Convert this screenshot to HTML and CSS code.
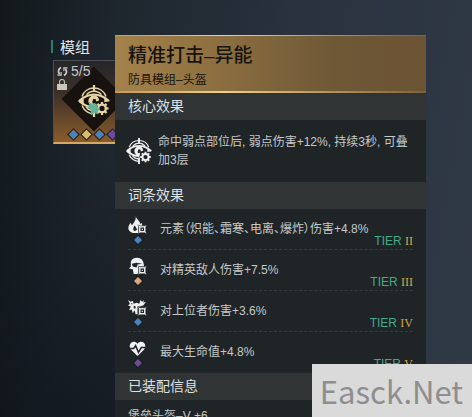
FILE: index.html
```
<!DOCTYPE html>
<html lang="zh-CN">
<head>
  <meta charset="UTF-8">
  <meta name="viewport" content="width=device-width, initial-scale=1.0">
  <title>模组</title>
  <link rel="stylesheet" href="styles.css">
</head>
<body>
  <!-- Shared icon shapes -->
  <svg class="defs" width="0" height="0" aria-hidden="true">
    <symbol id="scope" viewBox="0 0 28 28">
      <g fill="none" stroke="currentColor">
        <path d="M3.500 10A11.200 11.200 0 0 1 24.500 10M3.500 18A11.200 11.200 0 0 0 15 25.200" stroke-width="1.300"/>
        <path d="M7.500 8.500A8.500 8.500 0 0 1 20.500 8.500M7 19A8.500 8.500 0 0 0 14 22.500" stroke-width="1.300"/>
        <path d="M14 0v6M14 21v7" stroke-width="2"/>
        <path d="M1 14Q7 8.500 14 8.500T27 14M1 14Q7 19.500 14.500 19.500" stroke-width="2"/>
      </g>
      <path d="M0 14l5-3v6zM28 14l-5-3v4z" fill="currentColor"/>
      <path d="M14 9a5 5 0 1 0 1 9.900V16l-2 .5-.5-2 1-2.500 2 .5.500 2 2.500-1A5 5 0 0 0 14 9z" fill="currentColor"/>
      <circle cx="21" cy="20.500" r="3.300" fill="none" stroke="currentColor" stroke-width="2"/>
      <path d="M21 14.800v2M21 24.200v2M15.300 20.500h2M24.700 20.500h2M17 16.500l1.400 1.400M23.600 23.100l1.400 1.400M25 16.500l-1.400 1.400M17 24.500l1.400-1.400" stroke="currentColor" stroke-width="2"/>
    </symbol>
    <symbol id="chip" viewBox="0 0 8 8">
      <path d="M0 0l2 1h4l2-1-1 2v4l1 2-2-1H2L0 8l1-2V2z" fill="currentColor" stroke="#1f2427" stroke-width=".5"/>
      <path d="M2.500 2.500h3v3h-3z" fill="#1f2427"/>
      <path d="M3.500 3.500h1v1h-1z" fill="currentColor"/>
    </symbol>
  </svg>

  <main class="screen">
    <section class="modules">
      <h2 class="modules-title">模组</h2>
      <div class="card">
        <div class="card-diamond"></div>
        <svg class="card-scope"><use href="#scope"/></svg>
        <svg class="card-splash" viewBox="0 0 14 15"><path d="M1 0l4 3 4-1 1 4 3 2-3 2 1 4-4-2-4 3V9L0 6l2-2z" fill="#62b59a"/></svg>
        <div class="card-count">
          <svg class="cycle" viewBox="0 0 12 12" fill="none" stroke="currentColor" stroke-width="2"><path d="M4.500 1.800A4.300 4.300 0 0 0 3 9M7.500 10.200A4.300 4.300 0 0 0 9 3"/><path d="M.500 10h4V6.500M11.500 2h-4v3.500" stroke-width="1.300"/></svg>
          <span>5/5</span>
        </div>
        <svg class="lock" viewBox="0 0 10 11"><path d="M2.500 6V3a2.500 2.500 0 0 1 5 0v3" fill="none" stroke="#b9b6b2" stroke-width="1.200"/><path d="M0 5h10v6H0z" fill="#c9c5c0"/></svg>
        <div class="card-gems">
          <i class="gem blue"></i>
          <i class="gem yellow"></i>
          <i class="gem blue"></i>
          <i class="gem purple"></i>
        </div>
      </div>
    </section>

    <article class="tooltip">
      <header class="tooltip-header">
        <h1>精准打击–异能</h1>
        <p>防具模组–头盔</p>
      </header>

      <h3 class="section-title">核心效果</h3>
      <div class="core">
        <svg class="core-icon"><use href="#scope"/></svg>
        <p>命中弱点部位后, 弱点伤害+12%, 持续3秒, 可叠加3层</p>
      </div>

      <h3 class="section-title">词条效果</h3>
      <ul class="affixes">
        <li>
          <div class="affix-icon">
            <svg viewBox="0 0 20 20"><path d="M8 0c1 4 5 5 5 9l1-2c1 1 1 3 1 4h-4v7H7c-8-1-8-7-4-11l1 3c2-3 5-6 4-10z" fill="currentColor"/><path d="M7 10c2 2 1 3 3 4l-3 2c-2-1-2-4 0-6z" fill="#1f2427"/><use href="#chip" x="10" y="9" width="10" height="10"/></svg>
            <i class="gem blue"></i>
          </div>
          <div class="affix-body">
            <p class="affix-text">元素（炽能、霜寒、电离、爆炸）伤害+4.8%</p>
            <p class="tier">TIER <b>II</b></p>
          </div>
        </li>
        <li>
          <div class="affix-icon">
            <svg viewBox="0 0 20 20"><path d="M3 5C4 0 14-1 16 5l1 5h-6v6l-1 2H6l-1-5-4-1 2-2z" fill="currentColor"/><path d="M4 7l5-1 6 1-5 1-1 3-4-1z" fill="#1f2427"/><use href="#chip" x="10" y="9" width="10" height="10"/></svg>
            <i class="gem orange"></i>
          </div>
          <div class="affix-body">
            <p class="affix-text">对精英敌人伤害+7.5%</p>
            <p class="tier">TIER <b>III</b></p>
          </div>
        </li>
        <li>
          <div class="affix-icon">
            <svg viewBox="0 0 20 20"><path d="M0 2l3 2 2-1 1 3 3-1 3 1 1-4 2 2 2-2-1 3 3-1-3 4-4 1h-2v8H8l-1-4-2 3-1-4-3 1 2-4-3-1 2-2z" fill="currentColor"/><path d="M6 8l2 1v2H6zM3 5l2 1-1 1z" fill="#1f2427"/><use href="#chip" x="10" y="9" width="10" height="10"/></svg>
            <i class="gem blue"></i>
          </div>
          <div class="affix-body">
            <p class="affix-text">对上位者伤害+3.6%</p>
            <p class="tier">TIER <b>IV</b></p>
          </div>
        </li>
        <li>
          <div class="affix-icon">
            <svg viewBox="0 0 20 20"><path d="M10 18L3 11C-1 5 6 0 10 5c4-5 11 0 7 6z" fill="currentColor"/><path d="M2 10h4l2-3 3 7 3-5h4" fill="none" stroke="#1f2427" stroke-width="1.600"/></svg>
            <i class="gem purple"></i>
          </div>
          <div class="affix-body">
            <p class="affix-text">最大生命值+4.8%</p>
            <p class="tier">TIER <b>V</b></p>
          </div>
        </li>
      </ul>

      <h3 class="section-title">已装配信息</h3>
      <p class="equipped">堡垒头盔–V +6</p>
    </article>
  </main>

  <div class="watermark">Easck.Net</div>
</body>
</html>
```
FILE: styles.css
```
* {
  margin: 0;
  padding: 0;
  box-sizing: border-box;
}

body {
  height: 100vh;
  overflow: hidden;
  font-family: "Liberation Sans", "Noto Sans CJK SC", sans-serif;
  font-size: 12px;
  color: #c6c9c9;
  background:
    linear-gradient(to top, rgba(8, 13, 18, 0.5), transparent 70%) left / 45% 100% no-repeat,
    linear-gradient(100deg, #12181b 0%, #1e262e 22%, #29323d 55%, #303a46 100%);
}

.defs {
  position: absolute;
}

.screen {
  display: flex;
  align-items: flex-start;
  padding: 35px 46px 0 51px;
}

/* Left column, the card slides under the tooltip */
.modules {
  flex: 0 0 64px;
  min-width: 0;
}

.modules-title {
  display: flex;
  align-items: center;
  gap: 7px;
  height: 22px;
  font-size: 15px;
  font-weight: 400;
  color: #e2e5e7;
  white-space: nowrap;
}

.modules-title::before {
  content: "";
  width: 2px;
  height: 13px;
  background: #2c7c70;
}

.card {
  position: relative;
  width: 84px;
  height: 84px;
  margin: 3px 0 0 2px;
  padding: 4px 3px;
  border: 1px solid #4c5056;
  border-bottom: 2px solid #d5a866;
  background: linear-gradient(#25262b, #3d3028 40%, #8a5c2c);
}

.card-diamond {
  position: absolute;
  top: 15px;
  left: 17px;
  width: 46px;
  height: 46px;
  background: #17120f;
  transform: rotate(45deg);
}

.card-scope {
  position: absolute;
  top: 24px;
  left: 24px;
  width: 32px;
  height: 32px;
  color: #e6d5a4;
}

.card-splash {
  position: absolute;
  top: 40px;
  left: 34px;
  width: 13px;
  height: 15px;
}

.card-count {
  position: relative;
  display: flex;
  align-items: center;
  gap: 3px;
  height: 12px;
  font-size: 14px;
  color: #c5c6c8;
}

.cycle {
  width: 11px;
  height: 11px;
}

.lock {
  position: relative;
  display: block;
  width: 10px;
  height: 11px;
  margin: 2px 0 0;
}

.card-gems {
  position: absolute;
  left: 16px;
  bottom: 4px;
  display: flex;
  gap: 6px;
}

.gem {
  width: 7px;
  height: 7px;
  outline: 1px solid #1b1c20;
  transform: rotate(45deg);
}

.blue {
  background: #4584c0;
}

.yellow {
  background: #d9bc6c;
}

.orange {
  background: #dba67c;
}

.purple {
  background: #6b4b9c;
}

/* Tooltip */
.tooltip {
  position: relative;
  flex: 1;
  min-width: 0;
  background: #1f2427;
}

.tooltip-header {
  height: 58px;
  padding: 8px 13px 0;
  color: #17130d;
  border-top: 1px solid #a57a40;
  border-bottom: 2px solid;
  border-image: linear-gradient(to right, #c49a5a, #f0d08a 35%, #a98a55 75%, #7d6238) 1;
  background: linear-gradient(to right, #a5824b, #8b6e40 35%, #6f5836 70%, #6b5334);
}

.tooltip-header h1 {
  font-size: 19px;
  line-height: 24px;
  font-weight: 500;
}

.tooltip-header p {
  line-height: 24px;
}

.section-title {
  height: 27px;
  padding: 0 13px;
  font-size: 14px;
  line-height: 26px;
  font-weight: 400;
  color: #dfe1e1;
  background: #303435;
}

.core {
  display: flex;
  align-items: center;
  gap: 6px;
  height: 62px;
  padding: 0 13px 0 11px;
  line-height: 18px;
}

.core-icon {
  flex: none;
  width: 26px;
  height: 26px;
  color: #f0f2f2;
}

.affixes {
  padding: 0 13px;
  list-style: none;
}

.affixes li {
  display: flex;
  gap: 13px;
  height: 41px;
  border-bottom: 1px dashed #363c3e;
}

.affixes li:last-child {
  border-bottom: none;
}

.affix-icon {
  display: flex;
  flex-direction: column;
  align-items: center;
  gap: 2px;
  width: 19px;
  padding-top: 7px;
  color: #f0f2f2;
}

.affix-icon svg {
  width: 19px;
  height: 19px;
}

.affix-icon .gem {
  width: 6px;
  height: 6px;
}

.affix-body {
  flex: 1;
  padding-top: 13px;
}

.affix-text {
  line-height: 14px;
  white-space: nowrap;
  font-feature-settings: "palt";
}

.tier {
  line-height: 10px;
  text-align: right;
  color: #45a98b;
}

.tier b {
  font-family: "Liberation Serif", serif;
  font-weight: 400;
  color: #d6a848;
}

.equipped {
  height: 36px;
  padding: 0 13px;
  line-height: 32px;
}

.watermark {
  position: fixed;
  right: 0;
  bottom: 0;
  padding: 0 9px 0 8px;
  font-family: "Noto Sans CJK SC", sans-serif;
  font-size: 31px;
  line-height: 53px;
  color: #8e8e8e;
  background: #dadada;
}
```
